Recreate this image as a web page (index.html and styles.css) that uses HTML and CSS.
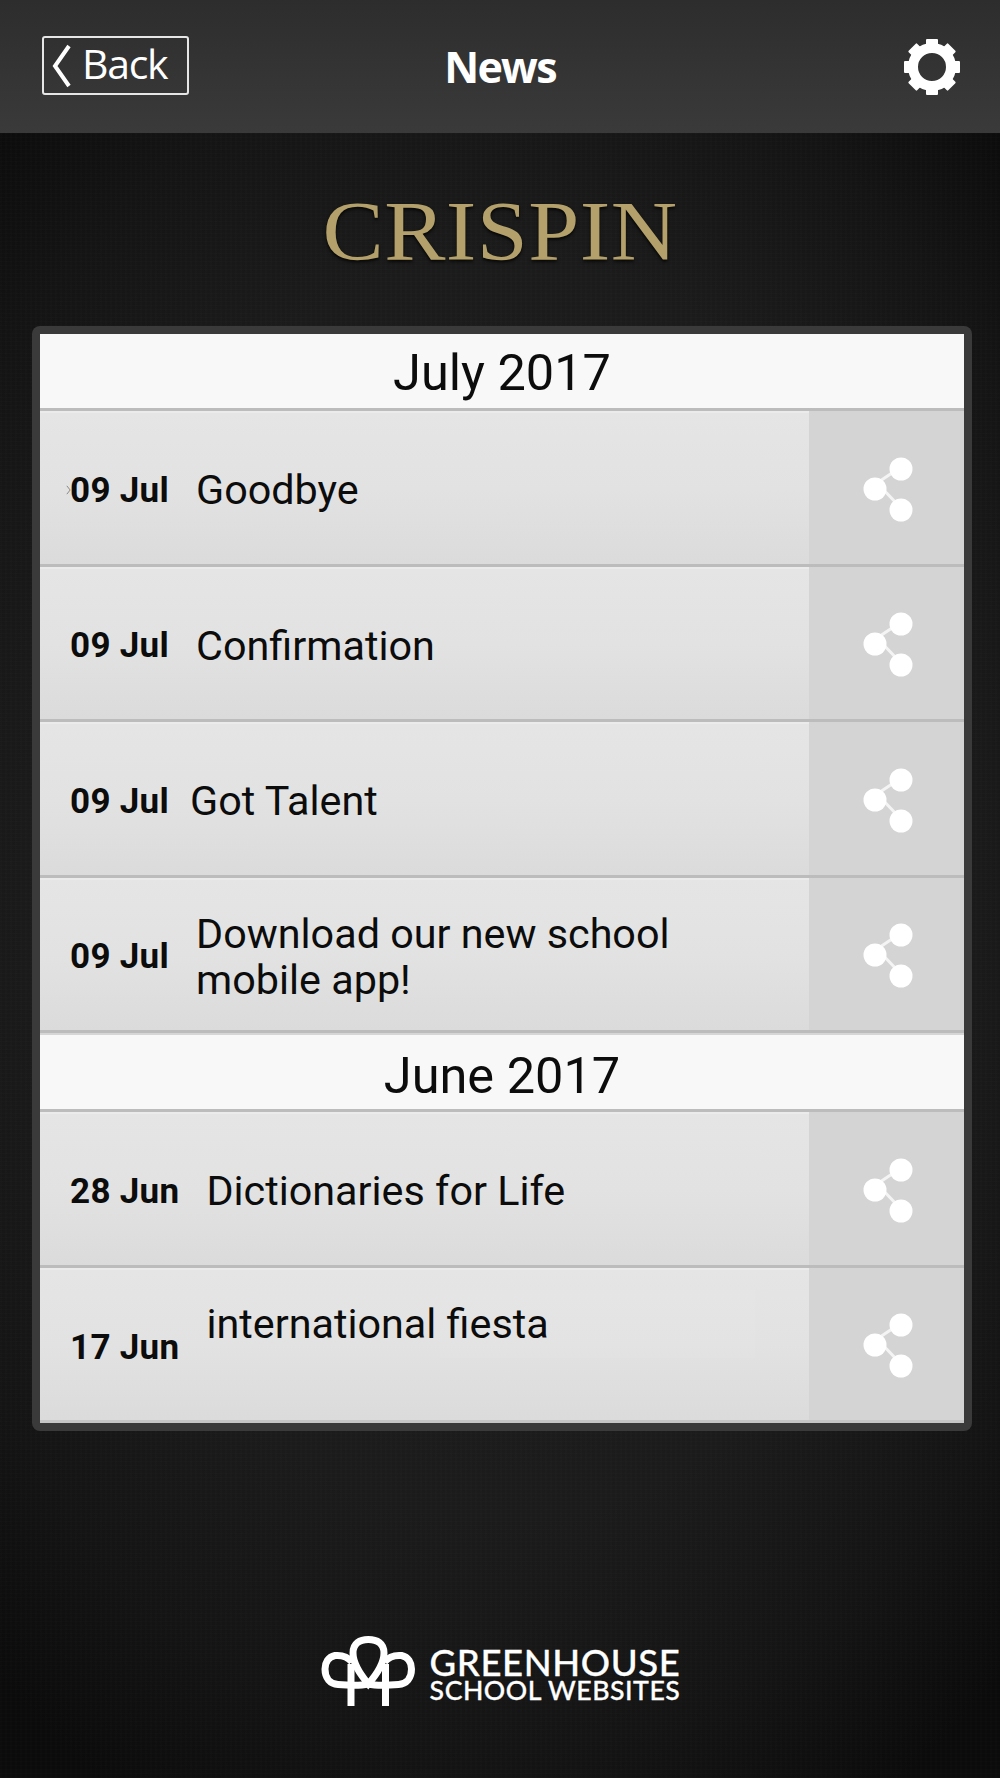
FILE: index.html
```html
<!DOCTYPE html>
<html lang="en">
<head>
<meta charset="utf-8">
<title>News</title>
<link rel="stylesheet" href="styles.css">
</head>
<body>
<div class="page">
  <header class="topbar">
    <a class="back">
      <svg class="back-chevron" viewBox="0 0 20 44"><path d="M17 2 3 22l14 20"/></svg>
      <span>Back</span>
    </a>
    <h1 class="title">News</h1>
    <svg class="gear" viewBox="0 0 60 60">
      <circle class="gear-ring" cx="30" cy="30" r="19"/>
      <g class="gear-teeth">
        <rect x="24" y="2" width="12" height="12" rx="1"/>
        <rect x="24" y="2" width="12" height="12" rx="1" transform="rotate(45 30 30)"/>
        <rect x="24" y="2" width="12" height="12" rx="1" transform="rotate(90 30 30)"/>
        <rect x="24" y="2" width="12" height="12" rx="1" transform="rotate(135 30 30)"/>
        <rect x="24" y="2" width="12" height="12" rx="1" transform="rotate(180 30 30)"/>
        <rect x="24" y="2" width="12" height="12" rx="1" transform="rotate(225 30 30)"/>
        <rect x="24" y="2" width="12" height="12" rx="1" transform="rotate(270 30 30)"/>
        <rect x="24" y="2" width="12" height="12" rx="1" transform="rotate(315 30 30)"/>
      </g>
    </svg>
  </header>

  <div class="brand">CRISPIN</div>

  <main class="card">
    <h2 class="month">July 2017</h2>
    <div class="row">
      <svg class="tick" viewBox="0 0 6 12"><path d="M1 1l4 5-4 5"/></svg>
      <div class="row-main"><span class="date">09 Jul</span><span class="headline">Goodbye</span></div>
      <div class="share"><svg class="share-icon" viewBox="0 0 52 66"><use href="#share"/></svg></div>
    </div>
    <div class="row">
      <div class="row-main"><span class="date">09 Jul</span><span class="headline">Confirmation</span></div>
      <div class="share"><svg class="share-icon" viewBox="0 0 52 66"><use href="#share"/></svg></div>
    </div>
    <div class="row">
      <div class="row-main row-tight"><span class="date">09 Jul</span><span class="headline">Got Talent</span></div>
      <div class="share"><svg class="share-icon" viewBox="0 0 52 66"><use href="#share"/></svg></div>
    </div>
    <div class="row">
      <div class="row-main"><span class="date">09 Jul</span><span class="headline headline-wrap">Download our new school mobile app!</span></div>
      <div class="share"><svg class="share-icon" viewBox="0 0 52 66"><use href="#share"/></svg></div>
    </div>
    <h2 class="month month-june">June 2017</h2>
    <div class="row">
      <div class="row-main"><span class="date">28 Jun</span><span class="headline">Dictionaries for Life</span></div>
      <div class="share"><svg class="share-icon" viewBox="0 0 52 66"><use href="#share"/></svg></div>
    </div>
    <div class="row row-last">
      <span class="patch"></span>
      <div class="row-main row-raised"><span class="date">17 Jun</span><span class="headline">international fiesta</span></div>
      <div class="share"><svg class="share-icon" viewBox="0 0 52 66"><use href="#share"/></svg></div>
    </div>
  </main>

  <footer class="footer">
    <svg class="gh-mark" viewBox="0 0 96 72">
      <path d="M31 72V30M65.500 72V30"/>
      <path d="M48.300 50C40 40 33 30 33 19 33 9 40 5.500 48.300 5.500 57 5.500 64 9 64 19 64 30 57 40 48.300 50Z"/>
      <path d="M32 28C28 23 21 21 15 21.500 8 23 5 29 5 35 5 44 10 50 18 50.500 29 51.500 40 52 48.300 50"/>
      <path d="M64.500 28C68.500 23 75.500 21 81.500 21.500 88.500 23 91.500 29 91.500 35 91.500 44 86.500 50 78.500 50.500 67.500 51.500 56.500 52 48.300 50"/>
    </svg>
    <div class="gh-text">
      <div class="gh-name">GREENHOUSE</div>
      <div class="gh-sub">SCHOOL WEBSITES</div>
    </div>
  </footer>
</div>

<svg class="defs" width="0" height="0">
  <symbol id="share" viewBox="0 0 52 66">
    <path d="M14 27 38 11M14 27 38 52" stroke="#fff" stroke-width="3" opacity=".75" fill="none"/>
    <circle cx="38" cy="13" r="11.500" fill="#fff"/>
    <circle cx="12" cy="33" r="11.500" fill="#fff"/>
    <circle cx="38" cy="54" r="11.500" fill="#fff"/>
  </symbol>
</svg>
</body>
</html>
```

FILE: styles.css
```css
* { box-sizing: border-box; }

html, body { margin: 0; padding: 0; }

body {
  width: 1000px;
  height: 1778px;
  overflow: hidden;
  background: #111;
}

.page {
  width: 1000px;
  height: 1778px;
  display: flex;
  flex-direction: column;
  background:
    repeating-linear-gradient(90deg, rgba(255,255,255,.006) 0 2px, transparent 2px 5px),
    repeating-linear-gradient(0deg, rgba(255,255,255,.006) 0 1px, transparent 1px 4px),
    radial-gradient(ellipse 760px 1050px at 50% 50%, #1f1f1f 0%, #1b1b1b 60%, #141414 82%, #0b0b0b 100%);
}

.topbar {
  height: 133px;
  flex: none;
  padding: 36px 38px 0 42px;
  display: flex;
  align-items: flex-start;
  justify-content: space-between;
  position: relative;
  background: linear-gradient(180deg, #2d2d2d 0%, #3a3a3a 100%);
  color: #fff;
}

.back {
  width: 147px;
  height: 59px;
  display: flex;
  align-items: center;
  gap: 10px;
  padding: 0 0 4px 8px;
  border: 2px solid #e6e6e6;
  border-radius: 3px;
  font: 400 41px/1 "Open Sans", sans-serif;
  letter-spacing: -1.300px;
}

.back-chevron {
  width: 20px;
  height: 44px;
  margin-top: 4px;
  flex: none;
}

.back-chevron path {
  fill: none;
  stroke: #fff;
  stroke-width: 4;
}

.title {
  position: absolute;
  left: 0;
  right: 0;
  top: 39px;
  margin: 0;
  text-align: center;
  font: 700 43px/56px "Open Sans", sans-serif;
  letter-spacing: -1.700px;
}

.gear {
  width: 60px;
  height: 60px;
  margin-top: 1px;
}

.gear-ring {
  fill: none;
  stroke: #fff;
  stroke-width: 10;
}

.gear-teeth { fill: #fff; }

.brand {
  height: 193px;
  flex: none;
  padding-top: 52px;
  text-align: center;
  font: 400 85px/1.100 "Liberation Serif", serif;
  letter-spacing: .4px;
  color: #b3a06a;
  text-shadow: 0 2px 3px rgba(0,0,0,.8);
  transform: scaleX(1.080);
}

.card {
  width: 940px;
  height: 1105px;
  flex: none;
  margin-left: 32px;
  padding: 8px;
  background: #3a3a3a;
  border-radius: 8px;
  display: flex;
  flex-direction: column;
  font-family: Roboto, sans-serif;
  color: #0c0c0c;
}

.month {
  height: 77px;
  flex: none;
  margin: 0;
  padding-top: 4px;
  text-align: center;
  font: 400 50.500px/70px Roboto, sans-serif;
  background: #f8f8f8;
  border-bottom: 3px solid #bcbcbc;
}

.month-june {
  height: 79px;
  padding-top: 6px;
  border-top: 2px solid #d6d6d6;
}

.row {
  height: 155.500px;
  flex: none;
  display: flex;
  position: relative;
  background: linear-gradient(180deg, #e5e5e5 0%, #e2e2e2 50%, #dbdbdb 100%);
  border-top: 2px solid #ebebeb;
  border-bottom: 3px solid #bcbcbc;
}

.row-last { border-bottom-color: #c6c6c6; }

.tick {
  position: absolute;
  left: 26px;
  top: 72px;
  width: 5px;
  height: 10px;
}

.tick path {
  fill: none;
  stroke: #888;
  stroke-width: 1.200;
}

.patch {
  position: absolute;
  left: 400px;
  top: 20px;
  width: 315px;
  height: 68px;
  background: rgba(255,255,255,.05);
}

.row-main {
  flex: 1;
  min-width: 0;
  display: flex;
  align-items: center;
  gap: 27px;
  padding: 4px 40px 0 30px;
  position: relative;
}

.row-tight { gap: 21px; }

.date {
  flex: none;
  font: 700 35px/1 Roboto, sans-serif;
  letter-spacing: .3px;
}

.headline {
  font: 400 41.300px/46px Roboto, sans-serif;
}

.headline-wrap { max-width: 520px; }

.row-raised { align-items: flex-start; }
.row-raised .date { margin-top: 56px; }
.row-raised .headline { margin-top: 27px; }

.share {
  width: 155px;
  flex: none;
  margin-top: -2px;
  padding: 3px 0 0 5px;
  display: flex;
  align-items: center;
  justify-content: center;
  background: #d4d4d4;
}

.share-icon {
  width: 52px;
  height: 66px;
  overflow: visible;
}

.footer {
  flex: 1;
  display: flex;
  align-items: flex-start;
  justify-content: center;
  gap: 14px;
  padding-top: 203px;
  padding-right: 0;
  color: #fff;
}

.gh-mark {
  width: 96px;
  height: 72px;
  flex: none;
}

.gh-mark path {
  fill: none;
  stroke: #fff;
  stroke-width: 7;
}

.gh-text {
  padding-top: 13px;
  font-family: Lato, sans-serif;
  font-weight: 500;
  -webkit-text-stroke: .3px #fff;
}

.gh-name {
  font-size: 36.500px;
  line-height: 30px;
  letter-spacing: .6px;
}

.gh-sub {
  font-size: 26.700px;
  line-height: 27px;
  letter-spacing: .5px;
}

.defs { position: absolute; }
```
